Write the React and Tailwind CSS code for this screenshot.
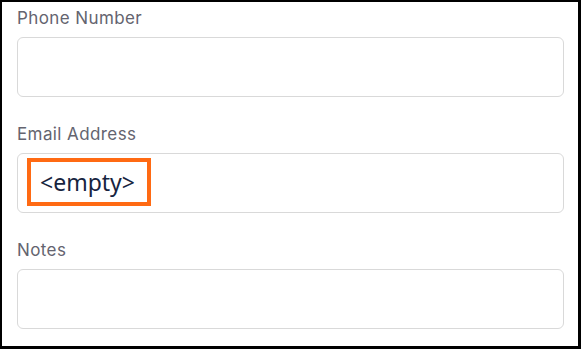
export default function App() {
  const fields = [
    { label: "Phone Number", value: null },
    { label: "Email Address", value: "<empty>" },
    { label: "Notes", value: null },
  ];
  return (
    <div className="w-[581px] h-[349px] bg-white border-black border-t-2 border-l-2 border-r-[3px] border-b-[3px] box-border px-[15px] pt-[6px] font-['Inter',sans-serif]">
      {fields.map((f, i) => (
        <div key={f.label} className={i === 0 ? "" : "mt-[27px]"}>
          <div className="h-[20px] leading-[20px] text-[17px] tracking-[0.4px] text-[#64646f] mb-[9px]">{f.label}</div>
          <div className="h-[60px] w-[547px] rounded-[6px] border border-[#d9d9d9] box-border pl-[9px] pt-[4px]">
            {f.value && (
              <div className="inline-flex items-center h-[48px] border-[4px] border-[#ff6a13] pl-[9px] pr-[12px] text-[23px] text-[#17243f] font-['Noto_Sans',sans-serif] leading-none">
                {f.value}
              </div>
            )}
          </div>
        </div>
      ))}
    </div>
  );
}
